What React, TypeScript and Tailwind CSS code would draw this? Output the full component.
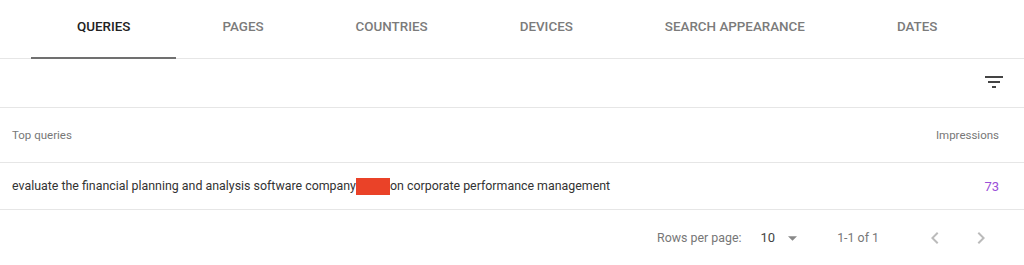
import React from "react";

const tabs = ["QUERIES", "PAGES", "COUNTRIES", "DEVICES", "SEARCH APPEARANCE", "DATES"];

export default function App() {
  return (
    <div className="w-[1024px] h-[265px] bg-white overflow-hidden" style={{ fontFamily: "Roboto, 'Liberation Sans', sans-serif" }}>
      {/* Tabs */}
      <div className="flex h-[59px] border-b border-[#e6e6e6] pl-[31px]">
        {tabs.map((t, i) => (
          <div key={t} className="relative flex items-center px-[46px] h-full">
            <span className={`text-[13.4px] font-medium pb-[4px] ${i === 0 ? "text-[#222]" : "text-[#7b7b7b]"}`}>{t}</span>
            {i === 0 && <div className="absolute left-0 right-0 bottom-[-1px] h-[2px] bg-[#707070]" />}
          </div>
        ))}
      </div>
      {/* Toolbar */}
      <div className="flex h-[49px] items-center justify-end pr-[18px] border-b border-[#e6e6e6]">
        <svg width="24" height="24" viewBox="0 0 24 24" className="mt-[-2px]">
          <path d="M10 18h4v-2h-4v2zM3 6v2h18V6H3zm3 7h12v-2H6v2z" fill="#444" />
        </svg>
      </div>
      {/* Header */}
      <div className="flex h-[55px] items-center justify-between pl-[12px] pr-[25px] border-b border-[#e6e6e6] text-[11.5px] text-[#777]">
        <span className="mt-[2px]">Top queries</span>
        <span className="mt-[2px]">Impressions</span>
      </div>
      {/* Row */}
      <div className="flex h-[47px] items-center justify-between pl-[12px] pr-[25px] border-b border-[#e6e6e6] text-[12.4px] text-[#333]">
        <span className="flex items-center mt-[1px]">
          evaluate the financial planning and analysis software company
          <span className="inline-block w-[34px] h-[17px] bg-[#ea4228]" />
          on corporate performance management
        </span>
        <span className="text-[#9a4fd8] text-[13px] mt-[1px]">73</span>
      </div>
      {/* Footer */}
      <div className="flex h-[54px] items-center justify-end text-[12.4px] text-[#777] pt-[2px]">
        <span className="mr-[19px]">Rows per page:</span>
        <span className="text-[#444] text-[13px] mr-[13px]">10</span>
        <svg width="9" height="5" viewBox="0 0 10 5" className="mr-[40px]">
          <path d="M0 0 L10 0 L5 5 Z" fill="#888" />
        </svg>
        <span className="mr-[44px]">1-1 of 1</span>
        <svg width="24" height="24" viewBox="0 0 24 24" className="mr-[22px]">
          <path d="M15.41 7.41L14 6l-6 6 6 6 1.41-1.41L10.83 12z" fill="#bbb" />
        </svg>
        <svg width="24" height="24" viewBox="0 0 24 24" className="mr-[31px]">
          <path d="M10 6L8.59 7.41 13.17 12l-4.58 4.59L10 18l6-6z" fill="#bbb" />
        </svg>
      </div>
    </div>
  );
}
